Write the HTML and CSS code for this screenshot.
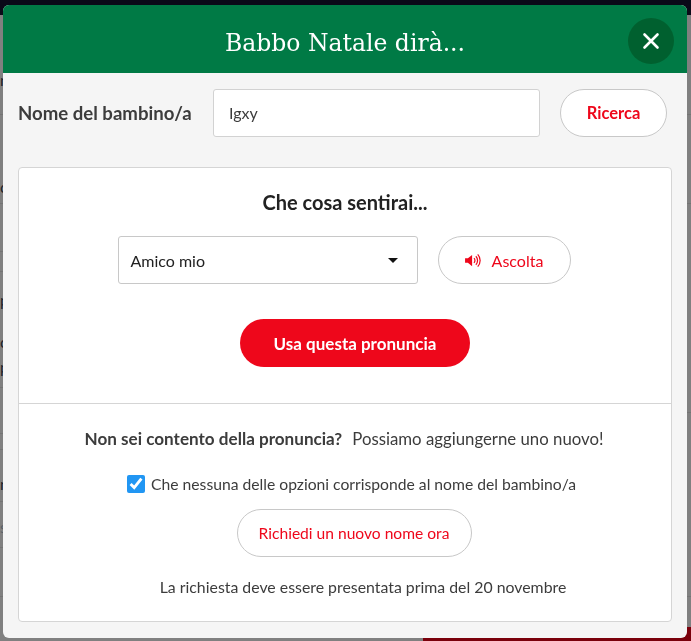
FILE: index.html
```html
<!DOCTYPE html>
<html lang="it">
<head>
    <meta charset="UTF-8">
    <meta name="viewport" content="width=device-width, initial-scale=1.0">
    <title>Babbo Natale dirà...</title>
    <link rel="stylesheet" href="styles.css">
</head>
<body>
    <!-- Pagina dietro la finestra -->
    <div class="page">
        <div class="page-top"></div>
        <div class="page-middle">
            <div class="strip strip-left">
                <div class="strip-row"><span class="frag">n</span></div>
                <div class="strip-row"><span class="frag">c</span></div>
                <div class="strip-row"></div>
                <div class="strip-row"></div>
                <div class="strip-row"><span class="frag">p</span><span class="frag">c</span><span class="frag">p</span></div>
                <div class="strip-row"></div>
                <div class="strip-row"></div>
                <div class="strip-row"><span class="frag">n</span></div>
                <div class="strip-row"><span class="frag frag-s">s</span></div>
                <div class="strip-row"></div>
            </div>
            <div class="strip strip-right">
                <div class="strip-row"></div>
                <div class="strip-row"></div>
                <div class="strip-row"></div>
                <div class="strip-row"></div>
            </div>
        </div>
        <div class="page-bottom"></div>
    </div>

    <div class="modal">
        <header class="modal-header">
            <h1>Babbo Natale dirà...</h1>
            <button type="button" class="close" aria-label="Chiudi">
                <svg width="18" height="18" viewBox="0 0 18 18">
                    <path d="M2.5 2.5L15.500 15.500M15.500 2.500L2.500 15.500" stroke="#ffffff" stroke-width="2.6" stroke-linecap="round"/>
                </svg>
            </button>
        </header>

        <form class="search">
            <label for="nome">Nome del bambino/a</label>
            <input type="text" id="nome" value="Igxy">
            <button type="button" class="btn btn-search">Ricerca</button>
        </form>

        <section class="card">
            <div class="card-top">
                <h2>Che cosa sentirai...</h2>
                <div class="listen">
                    <div class="select">
                        <span>Amico mio</span>
                        <i class="caret"></i>
                    </div>
                    <button type="button" class="btn btn-listen">
                        <svg width="17" height="15" viewBox="0 0 18 16">
                            <path d="M0 5.500h3L7.500 2v12L3 10.500H0z" fill="#ee071b"/>
                            <path d="M9.500 5.500a3.500 3.500 0 0 1 0 5M11.500 3.500a6.500 6.500 0 0 1 0 9M13.500 1.500a9.500 9.500 0 0 1 0 13" fill="none" stroke="#ee071b" stroke-width="1.300"/>
                        </svg>
                        Ascolta
                    </button>
                </div>
                <button type="button" class="btn btn-primary">Usa questa pronuncia</button>
            </div>
            <div class="card-bottom">
                <p class="question"><strong>Non sei contento della pronuncia?</strong><span>Possiamo aggiungerne uno nuovo!</span></p>
                <label class="check">
                    <input type="checkbox" checked>
                    Che nessuna delle opzioni corrisponde al nome del bambino/a
                </label>
                <button type="button" class="btn btn-request">Richiedi un nuovo nome ora</button>
                <p class="note">La richiesta deve essere presentata prima del 20 novembre</p>
            </div>
        </section>
    </div>
</body>
</html>
```

FILE: styles.css
```css
* {
    box-sizing: border-box;
}

html, body {
    height: 100%;
}

body {
    margin: 0;
    overflow: hidden;
    background-color: #808080;
    font-family: Lato, Arial, sans-serif;
    color: #3c3c3c;
}

/* Pagina dietro la finestra */
.page {
    height: 100%;
    display: flex;
    flex-direction: column;
}

.page-top {
    height: 15px;
    background-color: #0a0a18;
}

.page-middle {
    flex: 1;
    display: flex;
    justify-content: space-between;
}

.strip {
    width: 3px;
}

.strip-right {
    width: 4px;
}

.strip-row {
    border-bottom: 1px solid #747474;
}

.strip-left .strip-row:nth-child(1) { height: 100px; padding-top: 56px; }
.strip-left .strip-row:nth-child(2) { height: 89px; padding-top: 63px; }
.strip-left .strip-row:nth-child(3) { height: 48px; }
.strip-left .strip-row:nth-child(4) { height: 20px; }
.strip-left .strip-row:nth-child(5) { height: 116px; padding-top: 19px; }
.strip-left .strip-row:nth-child(6) { height: 46px; }
.strip-left .strip-row:nth-child(7) { height: 16px; }
.strip-left .strip-row:nth-child(8) { height: 52px; padding-top: 25px; }
.strip-left .strip-row:nth-child(9) { height: 46px; padding-top: 16px; }
.strip-left .strip-row:nth-child(10) { height: 49px; }

.strip-right .strip-row:nth-child(1) { height: 100px; }
.strip-right .strip-row:nth-child(2) { height: 89px; }
.strip-right .strip-row:nth-child(3) { height: 209px; }
.strip-right .strip-row:nth-child(4) { height: 184px; }

.frag {
    display: block;
    height: 18px;
    font-size: 16px;
    line-height: 18px;
    color: #20242c;
}

.frag + .frag {
    margin-top: 7px;
}

.frag:nth-child(2) {
    margin-top: 24px;
}

.frag-s {
    color: #5a6068;
}

.page-bottom {
    height: 14px;
    margin-left: 423px;
    background-color: #7a000b;
}

/* Finestra */
.modal {
    position: fixed;
    top: 5px;
    left: 3px;
    width: 684px;
    height: 633px;
    background-color: #f5f5f5;
    border-radius: 6px;
    overflow: hidden;
}

.modal-header {
    height: 68px;
    padding-top: 8px;
    background-color: #007a45;
    display: flex;
    align-items: center;
    justify-content: center;
}

.modal-header h1 {
    margin: 0;
    font-family: "DejaVu Serif", serif;
    font-size: 23.5px;
    font-weight: normal;
    color: #ffffff;
}

.close {
    position: absolute;
    top: 13px;
    right: 13px;
    width: 46px;
    height: 46px;
    padding: 0;
    border: none;
    border-radius: 50%;
    background-color: #00602f;
    display: flex;
    align-items: center;
    justify-content: center;
}

.search {
    display: flex;
    align-items: center;
    padding: 16px 20px 0 15px;
}

.search label {
    width: 195px;
    font-size: 18.6px;
    font-weight: bold;
}

.search input {
    width: 327px;
    height: 48px;
    padding: 0 15px 2px;
    border: 1px solid #d2d2d2;
    border-radius: 3px;
    background-color: #ffffff;
    font-family: Lato, Arial, sans-serif;
    font-size: 16px;
    color: #3c3c3c;
}

.btn {
    height: 48px;
    border: 1px solid #c8c8c8;
    border-radius: 24px;
    background-color: #ffffff;
    font-family: Lato, Arial, sans-serif;
    font-size: 16px;
    color: #ee071b;
}

.btn-search {
    width: 107px;
    margin-left: 20px;
    font-weight: bold;
    font-size: 16.5px;
}

.card {
    height: 455px;
    margin: 30px 15px 0;
    border: 1px solid #d5d5d5;
    border-radius: 4px;
    background-color: #ffffff;
}

.card-top {
    height: 236px;
    padding-top: 21px;
    display: flex;
    flex-direction: column;
    align-items: center;
    border-bottom: 1px solid #d5d5d5;
}

.card-top h2 {
    margin: 0;
    font-size: 20px;
    line-height: 26px;
    color: #222222;
}

.listen {
    margin: 21px 2px 0 0;
    display: flex;
    gap: 20px;
}

.select {
    width: 300px;
    height: 48px;
    padding: 0 11px 0 12px;
    border: 1px solid #c8c8c8;
    border-radius: 3px;
    display: flex;
    align-items: center;
    justify-content: space-between;
    font-size: 16px;
    color: #222222;
}

.caret {
    margin-right: 8px;
    border-top: 5px solid #111111;
    border-left: 5px solid transparent;
    border-right: 5px solid transparent;
}

.btn-listen {
    width: 133px;
    display: flex;
    align-items: center;
    justify-content: center;
    gap: 10px;
}

.btn-primary {
    width: 230px;
    margin: 35px 0 0 20px;
    border: none;
    background-color: #ee071b;
    color: #ffffff;
    font-size: 17px;
    font-weight: bold;
}

.card-bottom {
    display: flex;
    flex-direction: column;
    align-items: center;
}

.question {
    margin: 24px 2px 0 0;
    font-size: 17.1px;
    line-height: 22px;
}

.question span {
    margin-left: 10px;
    font-size: 16.8px;
}

.check {
    margin: 23px 0 0 13px;
    display: flex;
    align-items: center;
    gap: 6px;
    font-size: 15.7px;
    line-height: 22px;
}

.check input {
    width: 18px;
    height: 18px;
    margin: 0;
    accent-color: #2196f3;
}

.btn-request {
    width: 235px;
    margin: 14px 0 0 18px;
    font-size: 15.6px;
}

.note {
    margin: 20px 0 0 36px;
    font-size: 15.85px;
    line-height: 20px;
}
```
